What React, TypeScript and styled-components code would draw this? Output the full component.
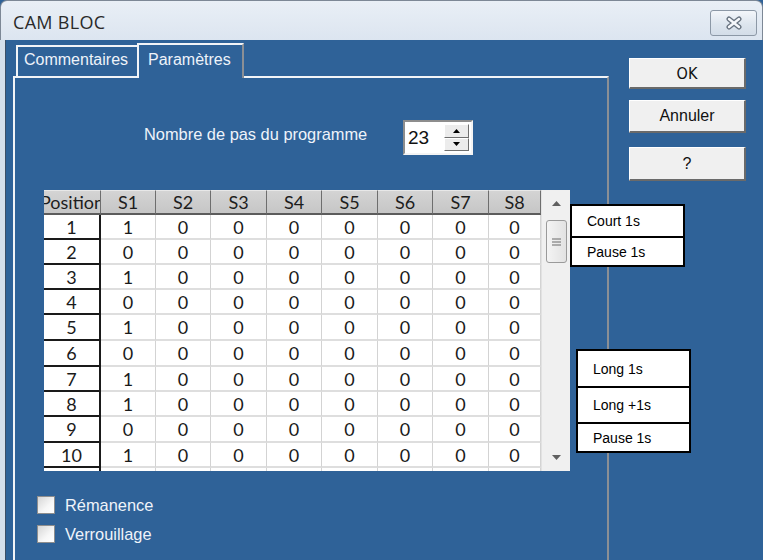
import React from "react";
import styled, { createGlobalStyle } from "styled-components";

const BLUE = "#2f6298";

const GlobalStyle = createGlobalStyle`
  html, body {
    margin: 0;
    padding: 0;
    background: ${BLUE};
  }
  body {
    width: 763px;
    height: 560px;
    overflow: hidden;
    font-family: "Liberation Sans", Arial, sans-serif;
  }
`;

const Window = styled.div`
  position: relative;
  width: 763px;
  height: 560px;
  display: flex;
  flex-direction: column;
  overflow: hidden;
  background: ${BLUE};
`;

const TitleBar = styled.div`
  flex: none;
  height: 40px;
  box-sizing: border-box;
  display: flex;
  align-items: center;
  justify-content: space-between;
  padding: 0 5px 0 12px;
  background: linear-gradient(180deg, #e9eff6 0%, #dce5f0 100%);
  border: 1px solid #7d8896;
  border-bottom: none;
  border-radius: 7px 7px 0 0;
`;

const Title = styled.span`
  font-family: "Open Sans", "Noto Sans", sans-serif;
  font-size: 18px;
  letter-spacing: 0.3px;
  color: #2a2a2a;
  margin-top: 3px;
`;

const CloseButton = styled.div`
  width: 47px;
  height: 26px;
  box-sizing: border-box;
  margin-top: 4px;
  display: flex;
  align-items: center;
  justify-content: center;
  border: 1px solid #8c98a6;
  border-radius: 3px;
  background: linear-gradient(180deg, #f3f6fa 0%, #dde5ee 55%, #d3dde8 100%);
`;

const Body = styled.div`
  flex: 1;
  display: flex;
  align-items: stretch;
  border-left: 5px solid #d5dfeb;
  box-shadow: inset 1px 0 0 #3d4f66;
  padding-left: 8px;
  min-height: 0;
`;

const TabArea = styled.div`
  width: 596px;
  display: flex;
  flex-direction: column;
`;

const TabStrip = styled.div`
  flex: none;
  height: 36px;
  display: flex;
  align-items: flex-end;
  padding-left: 3px;
`;

const Tab = styled.div<{ $active?: boolean; $w: number }>`
  box-sizing: border-box;
  position: relative;
  z-index: ${(p) => (p.$active ? 2 : 1)};
  width: ${(p) => p.$w}px;
  height: ${(p) => (p.$active ? 35 : 31)}px;
  margin-bottom: ${(p) => (p.$active ? -2 : 0)}px;
  padding: ${(p) => (p.$active ? "6px 0 0 9px" : "4px 0 0 6px")};
  border-top: 2px solid #f2f4f7;
  border-left: 2px solid #f2f4f7;
  border-right: ${(p) => (p.$active ? "2px solid #8b8f95" : "none")};
  background: ${BLUE};
  color: #eef3fa;
  font-size: 16px;
  white-space: nowrap;
`;

const TabPanel = styled.div`
  flex: 1;
  box-sizing: border-box;
  border-top: 2px solid #f2f4f7;
  border-left: 2px solid #f2f4f7;
  border-right: 2px solid #8b8f95;
  display: flex;
  flex-direction: column;
`;

const StepsRow = styled.div`
  display: flex;
  align-items: flex-start;
  margin: 42px 0 0 129px;
`;

const StepsLabel = styled.span`
  width: 259px;
  margin-top: 5px;
  color: #eef3fa;
  font-size: 16.4px;
  line-height: 18px;
`;

const SpinBox = styled.div`
  box-sizing: border-box;
  width: 70px;
  height: 35px;
  display: flex;
  align-items: stretch;
  justify-content: space-between;
  padding: 2px 2px 2px 3px;
  background: #fff;
  border-top: 2px solid #8d8d8d;
  border-left: 2px solid #8d8d8d;
  border-bottom: 2px solid #f4f4f4;
  border-right: 2px solid #f4f4f4;
`;

const SpinValue = styled.span`
  font-size: 19px;
  color: #111;
  line-height: 27px;
`;

const SpinButtons = styled.div`
  width: 25px;
  display: flex;
  flex-direction: column;
`;

const SpinButton = styled.div`
  flex: 1;
  box-sizing: border-box;
  display: flex;
  align-items: center;
  justify-content: center;
  background: #ececec;
  border-top: 1px solid #fff;
  border-left: 1px solid #fff;
  border-right: 1px solid #6f6f6f;
  border-bottom: 1px solid #6f6f6f;
`;

const TableFrame = styled.div`
  margin: 35px 0 0 29px;
  width: 526px;
  height: 281px;
  display: flex;
  background: #fff;
`;

const Grid = styled.div<{ $rows: string }>`
  width: 497px;
  height: 281px;
  overflow: hidden;
  display: grid;
  grid-template-columns: 57px 55px 55px 56px 55px 56px 55px 56px 52px;
  grid-template-rows: ${(p) => p.$rows};
  align-content: start;
  font-family: Lato, "Noto Sans", sans-serif;
`;

const HeadCell = styled.div`
  box-sizing: border-box;
  overflow: hidden;
  display: flex;
  align-items: center;
  justify-content: center;
  white-space: nowrap;
  background: linear-gradient(180deg, #d4d4d4 0%, #c6c6c6 100%);
  border-top: 1px solid #e8e8e8;
  border-right: 1px solid #6e6e6e;
  border-bottom: 2px solid #5c5c5c;
  font-size: 18px;
  color: #1d1d1d;
`;

const Cell = styled.div<{ $pos?: boolean }>`
  box-sizing: border-box;
  display: flex;
  align-items: center;
  justify-content: center;
  background: #fff;
  font-size: 18px;
  color: #1a1a1a;
  border-right: ${(p) => (p.$pos ? "2px solid #1a1a1a" : "1px solid #d3d3d3")};
  border-bottom: ${(p) => (p.$pos ? "2px solid #1a1a1a" : "2px solid #dedede")};
`;

const ScrollBar = styled.div`
  width: 29px;
  box-sizing: border-box;
  display: flex;
  flex-direction: column;
  align-items: center;
  background: #f0f0f0;
  border-left: 1px solid #e2e2e2;
  color: #606060;
`;

const ScrollArrow = styled.div`
  height: 27px;
  display: flex;
  align-items: center;
  justify-content: center;
`;

const ScrollThumb = styled.div`
  margin-top: 3px;
  width: 21px;
  height: 43px;
  box-sizing: border-box;
  display: flex;
  align-items: center;
  justify-content: center;
  border: 1px solid #9a9a9a;
  border-radius: 3px;
  background: linear-gradient(90deg, #f4f4f4 0%, #e2e2e2 100%);
`;

const ScrollTrack = styled.div`
  flex: 1;
`;

const Checks = styled.div`
  margin: 25px 0 0 22px;
  display: flex;
  flex-direction: column;
  gap: 11px;
`;

const CheckRow = styled.label`
  display: flex;
  align-items: center;
  gap: 10px;
  height: 18px;
  color: #eef3fa;
  font-size: 16.4px;
`;

const CheckBox = styled.span`
  width: 18px;
  height: 18px;
  box-sizing: border-box;
  border: 1px solid #8e8e8e;
  background: linear-gradient(135deg, #d6d6d6 0%, #f7f7f7 60%, #ffffff 100%);
`;

const ButtonColumn = styled.div`
  margin-left: 20px;
  padding-top: 18px;
  display: flex;
  flex-direction: column;
`;

const DialogButton = styled.div<{ $h: number; $gap: number; $narrow?: boolean }>`
  box-sizing: border-box;
  width: 117px;
  height: ${(p) => p.$h}px;
  margin-top: ${(p) => p.$gap}px;
  display: flex;
  align-items: center;
  justify-content: center;
  background: #f0f0f0;
  border-top: 1px solid #ffffff;
  border-left: 1px solid #ffffff;
  border-right: 2px solid #6a6a6a;
  border-bottom: 2px solid #6a6a6a;
  color: #111;
  font-family: ${(p) =>
    p.$narrow
      ? '"DejaVu Sans Condensed", "Liberation Sans", sans-serif'
      : '"Liberation Sans", Arial, sans-serif'};
  font-size: 16px;
`;

const Legend = styled.div<{ $left: number; $top: number }>`
  position: absolute;
  left: ${(p) => p.$left}px;
  top: ${(p) => p.$top}px;
  width: 115px;
  box-sizing: border-box;
  background: #fff;
  border: 2px solid #000;
  z-index: 5;
`;

const LegendItem = styled.div<{ $h: number; $first?: boolean }>`
  height: ${(p) => p.$h}px;
  display: flex;
  align-items: center;
  padding-left: 15px;
  border-top: ${(p) => (p.$first ? "none" : "2px solid #000")};
  font-size: 14px;
  color: #000;
`;

const columns = ["Position", "S1", "S2", "S3", "S4", "S5", "S6", "S7", "S8"];
const s1 = [1, 0, 1, 0, 1, 0, 1, 1, 0, 1];
const rowHeights = [25, 25, 25, 25, 26, 26, 25, 25, 26, 25];

function Triangle({ up, size = 7 }: { up?: boolean; size?: number }) {
  const h = Math.round(size * 0.6);
  return (
    <svg width={size} height={h} viewBox={`0 0 ${size} ${h}`}>
      <polygon
        points={up ? `0,${h} ${size / 2},0 ${size},${h}` : `0,0 ${size / 2},${h} ${size},0`}
        fill="currentColor"
      />
    </svg>
  );
}

export default function App() {
  const template = `25px ${rowHeights.map((h) => h + "px").join(" ")} 25px`;
  return (
    <Window>
      <GlobalStyle />
      <TitleBar>
        <Title>CAM BLOC</Title>
        <CloseButton>
          <svg width="18" height="14" viewBox="0 0 18 14">
            <path d="M4 3 L14 11 M14 3 L4 11" stroke="#66717e" strokeWidth="5" strokeLinecap="round" />
            <path d="M4 3 L14 11 M14 3 L4 11" stroke="#f6f8fb" strokeWidth="2.4" strokeLinecap="round" />
          </svg>
        </CloseButton>
      </TitleBar>
      <Body>
        <TabArea>
          <TabStrip>
            <Tab $w={121}>Commentaires</Tab>
            <Tab $w={107} $active>
              Paramètres
            </Tab>
          </TabStrip>
          <TabPanel>
            <StepsRow>
              <StepsLabel>Nombre de pas du programme</StepsLabel>
              <SpinBox>
                <SpinValue>23</SpinValue>
                <SpinButtons>
                  <SpinButton>
                    <Triangle up size={7} />
                  </SpinButton>
                  <SpinButton>
                    <Triangle size={7} />
                  </SpinButton>
                </SpinButtons>
              </SpinBox>
            </StepsRow>
            <TableFrame>
              <Grid $rows={template}>
                {columns.map((c) => (
                  <HeadCell key={c}>{c}</HeadCell>
                ))}
                {s1.map((v, i) => (
                  <React.Fragment key={i}>
                    <Cell $pos>{i + 1}</Cell>
                    <Cell>{v}</Cell>
                    {columns.slice(2).map((c) => (
                      <Cell key={c}>0</Cell>
                    ))}
                  </React.Fragment>
                ))}
                <Cell $pos />
                {columns.slice(1).map((c) => (
                  <Cell key={c} />
                ))}
              </Grid>
              <ScrollBar>
                <ScrollArrow>
                  <Triangle up size={9} />
                </ScrollArrow>
                <ScrollThumb>
                  <svg width="9" height="8" viewBox="0 0 9 8">
                    <path d="M0 1 H9 M0 4 H9 M0 7 H9" stroke="#6a6a6a" strokeWidth="1" />
                  </svg>
                </ScrollThumb>
                <ScrollTrack />
                <ScrollArrow>
                  <Triangle size={9} />
                </ScrollArrow>
              </ScrollBar>
            </TableFrame>
            <Checks>
              <CheckRow>
                <CheckBox />
                Rémanence
              </CheckRow>
              <CheckRow>
                <CheckBox />
                Verrouillage
              </CheckRow>
            </Checks>
          </TabPanel>
        </TabArea>
        <ButtonColumn>
          <DialogButton $h={31} $gap={0} $narrow>
            OK
          </DialogButton>
          <DialogButton $h={33} $gap={11}>
            Annuler
          </DialogButton>
          <DialogButton $h={34} $gap={14}>
            ?
          </DialogButton>
        </ButtonColumn>
      </Body>
      <Legend $left={570} $top={204}>
        <LegendItem $first $h={30}>
          Court 1s
        </LegendItem>
        <LegendItem $h={27}>Pause 1s</LegendItem>
      </Legend>
      <Legend $left={576} $top={349}>
        <LegendItem $first $h={35}>
          Long 1s
        </LegendItem>
        <LegendItem $h={34}>Long +1s</LegendItem>
        <LegendItem $h={27}>Pause 1s</LegendItem>
      </Legend>
    </Window>
  );
}
